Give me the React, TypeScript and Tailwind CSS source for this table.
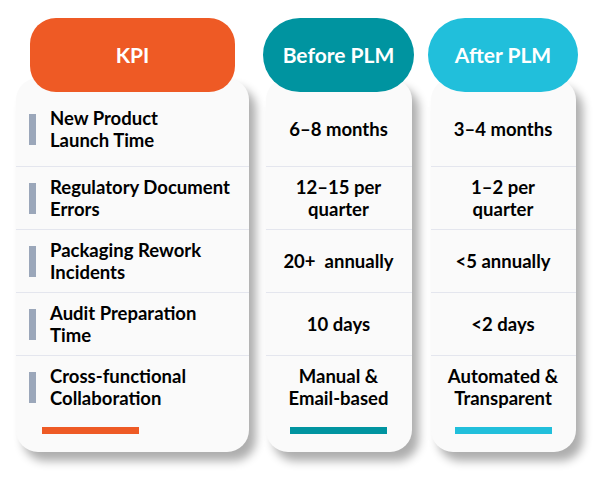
import React from 'react';

interface Column {
    title: string;
    headerColor: string;
    barColor: string;
    headerWidth: string;
    cardWidth: string;
    values: string[][];
}

const kpis = [
    ['New Product', 'Launch Time'],
    ['Regulatory Document', 'Errors'],
    ['Packaging Rework', 'Incidents'],
    ['Audit Preparation', 'Time'],
    ['Cross-functional', 'Collaboration'],
];

const columns: Column[] = [
    {
        title: 'Before PLM',
        headerColor: 'bg-[#0094a0]',
        barColor: 'bg-[#0094a0]',
        headerWidth: 'w-[151px]',
        cardWidth: 'w-[146px]',
        values: [['6–8 months'], ['12–15 per', 'quarter'], ['20+\u00a0 annually'], ['10 days'], ['Manual &', 'Email-based']],
    },
    {
        title: 'After PLM',
        headerColor: 'bg-[#21bfdb]',
        barColor: 'bg-[#21bfdb]',
        headerWidth: 'w-[150px]',
        cardWidth: 'w-[145px]',
        values: [['3–4 months'], ['1–2 per', 'quarter'], ['<5 annually'], ['<2 days'], ['Automated &', 'Transparent']],
    },
];

const rowHeights = ['h-[75px]', 'h-[63px]', 'h-[63px]', 'h-[63px]', 'h-[62px]'];

const cardClass = 'bg-[#fafafa] rounded-[22px] shadow-[7px_9px_10px_rgba(0,0,0,0.32)] -mt-[14px] pt-[14px] pb-[18px] flex flex-col';

export default function App() {
    return (
        <div className="w-[601px] h-[480px] bg-white flex gap-[16px] pl-[16px] pt-[18px]" style={{ fontFamily: 'Lato, "Open Sans", sans-serif' }}>
            {/* KPI column */}
            <div className="flex flex-col items-center w-[233px]">
                <div className="relative z-10 w-[205px] h-[74px] rounded-[26px] bg-[#ee5a25] flex items-center justify-center text-white font-bold text-[21px]">
                    KPI
                </div>
                <div className={`${cardClass} w-[233px]`}>
                    {kpis.map((lines, i) => (
                        <div key={i} className={`${rowHeights[i]} flex items-center gap-[14px] pl-[13px] ${i < kpis.length - 1 ? 'border-b border-[#e4e6ee]' : ''}`}>
                            <div className="w-[7px] h-[31px] bg-[#9ba7ba] shrink-0" />
                            <div className="text-[18.5px] leading-[22px] font-bold text-black">
                                {lines.map((l, j) => <div key={j}>{l}</div>)}
                            </div>
                        </div>
                    ))}
                    <div className="mt-[9px] ml-[26px] w-[97px] h-[7px] bg-[#ee5a25]" />
                </div>
            </div>

            {columns.map((col) => (
                <div key={col.title} className="flex flex-col items-center -ml-[2px]">
                    <div className={`relative z-10 ${col.headerWidth} h-[74px] rounded-full ${col.headerColor} flex items-center justify-center text-white font-bold text-[21px]`}>
                        {col.title}
                    </div>
                    <div className={`${cardClass} ${col.cardWidth}`}>
                        {col.values.map((lines, i) => (
                            <div key={i} className={`${rowHeights[i]} flex items-center justify-center text-center ${i < col.values.length - 1 ? 'border-b border-[#e4e6ee]' : ''}`}>
                                <div className="text-[18.5px] leading-[22px] font-bold text-black whitespace-pre">
                                    {lines.map((l, j) => <div key={j}>{l}</div>)}
                                </div>
                            </div>
                        ))}
                        <div className={`mt-[9px] mx-auto w-[97px] h-[7px] ${col.barColor}`} />
                    </div>
                </div>
            ))}
        </div>
    );
}
